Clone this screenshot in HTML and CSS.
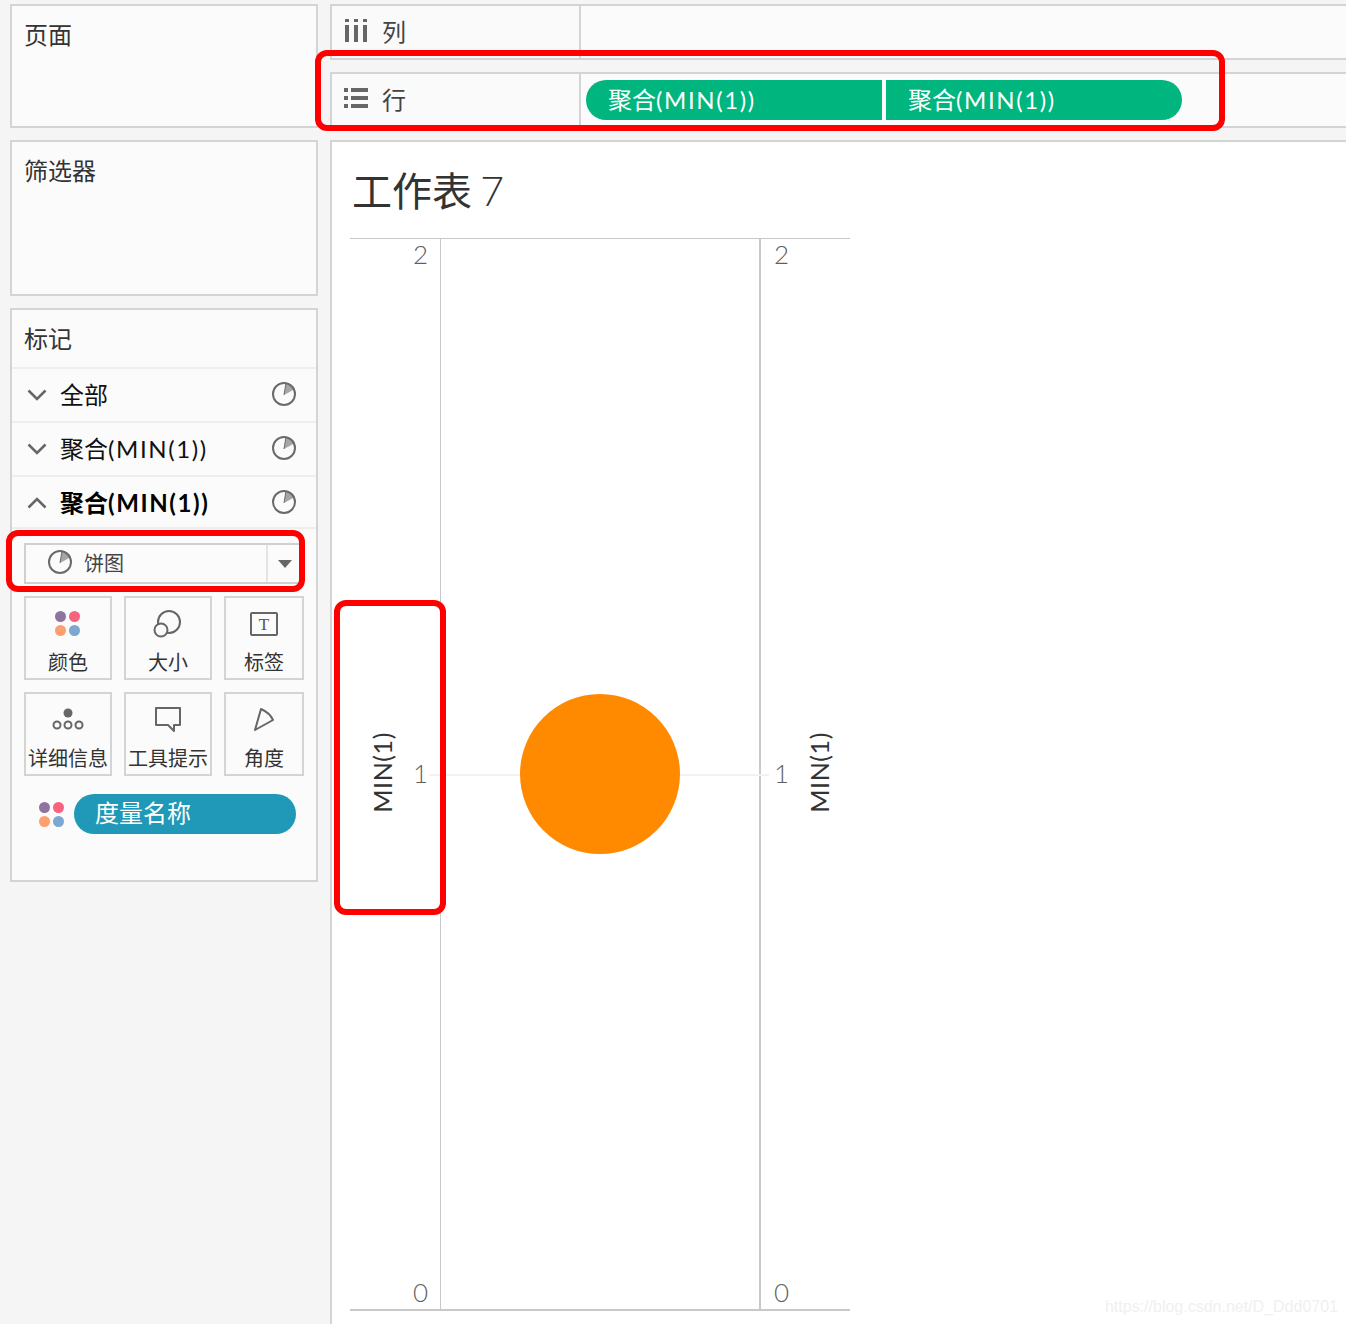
FILE: index.html
```html
<!DOCTYPE html>
<html lang="zh-CN">
<head>
    <meta charset="UTF-8">
    <meta name="viewport" content="width=device-width, initial-scale=1.0">
    <title>工作表 7</title>
    <link rel="stylesheet" href="styles.css">
</head>
<body>
    <svg class="defs" width="0" height="0">
        <symbol id="pie" viewBox="0 0 26 26">
            <path d="M13 14 15 2A11 11 0 0 1 24 8Z" fill="#a6a6a6"/>
            <circle cx="13" cy="13" r="11" fill="none" stroke="#6a6a6a" stroke-width="2"/>
            <path d="M13 14 15 2" fill="none" stroke="#6a6a6a"/>
        </symbol>
        <symbol id="dots" viewBox="0 0 26 26">
            <circle cx="6.500" cy="6.500" r="5.500" fill="#8f74a0"/>
            <circle cx="20.500" cy="6.500" r="5.500" fill="#f9627f"/>
            <circle cx="6.500" cy="20.500" r="5.500" fill="#fd9f6e"/>
            <circle cx="20.500" cy="20.500" r="5.500" fill="#7ba7d0"/>
        </symbol>
    </svg>

    <div class="layout">
        <aside class="side">
            <section class="card pages-card">页面</section>
            <section class="card filters-card">筛选器</section>
            <section class="card marks-card">
                <div class="marks-title">标记</div>
                <div class="mark-row">
                    <svg class="chev" viewBox="0 0 20 12"><path d="M1.500 1.500 10 10l8.500-8.500"/></svg>
                    <span class="mark-name">全部</span>
                    <svg class="pie"><use href="#pie"/></svg>
                </div>
                <div class="mark-row">
                    <svg class="chev" viewBox="0 0 20 12"><path d="M1.500 1.500 10 10l8.500-8.500"/></svg>
                    <span class="mark-name">聚合<span class="lat">(MIN(1))</span></span>
                    <svg class="pie"><use href="#pie"/></svg>
                </div>
                <div class="mark-row active">
                    <svg class="chev" viewBox="0 0 20 12"><path d="M1.500 10.500 10 2l8.500 8.500"/></svg>
                    <span class="mark-name">聚合<span class="lat">(MIN(1))</span></span>
                    <svg class="pie"><use href="#pie"/></svg>
                </div>
                <div class="type-select">
                    <svg class="pie"><use href="#pie"/></svg>
                    <span class="type-name">饼图</span>
                    <span class="type-arrow"></span>
                </div>
                <div class="mark-btns">
                    <div class="mark-btn">
                        <svg class="btn-icon" viewBox="0 0 30 30"><use href="#dots" x="1" y="0" width="26" height="26"/></svg>
                        <span>颜色</span>
                    </div>
                    <div class="mark-btn">
                        <svg class="btn-icon" viewBox="0 0 30 30" fill="none" stroke="#666" stroke-width="2"><circle cx="16" cy="12" r="11"/><circle cx="8" cy="20" r="6.500" fill="#fbfbfb"/></svg>
                        <span>大小</span>
                    </div>
                    <div class="mark-btn">
                        <svg class="btn-icon" viewBox="0 0 30 30"><rect x="2" y="3" width="26" height="22" fill="none" stroke="#666" stroke-width="2" rx="1"/><text x="15" y="20" class="t-glyph">T</text></svg>
                        <span>标签</span>
                    </div>
                    <div class="mark-btn">
                        <svg class="btn-icon btn-icon-wide" viewBox="0 0 34 30" fill="none" stroke="#666" stroke-width="2"><circle cx="17" cy="7" r="4.500" fill="#666" stroke="none"/><circle cx="6" cy="19" r="3.500"/><circle cx="17" cy="19" r="3.500"/><circle cx="28" cy="19" r="3.500"/></svg>
                        <span>详细信息</span>
                    </div>
                    <div class="mark-btn">
                        <svg class="btn-icon" viewBox="0 0 30 30" fill="none" stroke="#666" stroke-width="2"><path d="M3 2h24v17h-6v6l-6-6H3Z" stroke-linejoin="round"/></svg>
                        <span>工具提示</span>
                    </div>
                    <div class="mark-btn">
                        <svg class="btn-icon" viewBox="0 0 30 30" fill="none" stroke="#666" stroke-width="2"><path d="M12 3Q21 7 24 14L6 24Z" stroke-linejoin="round"/></svg>
                        <span>角度</span>
                    </div>
                </div>
                <div class="legend-row">
                    <svg class="legend-dots"><use href="#dots"/></svg>
                    <div class="legend-pill">度量名称</div>
                </div>
            </section>
        </aside>

        <main class="main">
            <div class="shelf">
                <div class="shelf-label">
                    <svg class="shelf-icon" viewBox="0 0 24 24" fill="#666"><rect x="1" y="1" width="4" height="3"/><rect x="1" y="7" width="4" height="17"/><rect x="10" y="1" width="4" height="3"/><rect x="10" y="7" width="4" height="17"/><rect x="19" y="1" width="4" height="3"/><rect x="19" y="7" width="4" height="17"/></svg>
                    <span>列</span>
                </div>
            </div>
            <div class="shelf">
                <div class="shelf-label">
                    <svg class="shelf-icon" viewBox="0 0 24 24" fill="#666"><rect x="0" y="2" width="4" height="4"/><rect x="7" y="2" width="17" height="4"/><rect x="0" y="10" width="4" height="4"/><rect x="7" y="10" width="17" height="4"/><rect x="0" y="18" width="4" height="4"/><rect x="7" y="18" width="17" height="4"/></svg>
                    <span>行</span>
                </div>
                <div class="shelf-pills">
                    <div class="pill pill-first">聚合<span class="lat">(MIN(1))</span></div>
                    <div class="pill pill-last">聚合<span class="lat">(MIN(1))</span></div>
                </div>
            </div>

            <section class="view">
                <h1 class="view-title">工作表 <span class="title-num">7</span></h1>
                <div class="chart">
                    <div class="axis axis-left">
                        <div class="axis-name">MIN(1)</div>
                        <div class="ticks"><span>2</span><span>1</span><span>0</span></div>
                    </div>
                    <div class="plot"><div class="mark-circle"></div></div>
                    <div class="axis axis-right">
                        <div class="ticks"><span>2</span><span>1</span><span>0</span></div>
                        <div class="axis-name">MIN(1)</div>
                    </div>
                </div>
            </section>
        </main>
    </div>

    <!-- red annotations drawn on top of the screenshot -->
    <div class="note note-rows"></div>
    <div class="note note-type"></div>
    <div class="note note-axis"></div>
    <div class="watermark">https://blog.csdn.net/D_Ddd0701</div>
</body>
</html>
```

FILE: styles.css
```css
* {
    box-sizing: border-box;
}
html, body {
    margin: 0;
    height: 1324px;
    overflow: hidden;
}
body {
    position: relative;
    background: #f5f5f5;
    color: #333;
    font-family: Lato, "Noto Sans CJK SC", sans-serif;
    font-size: 24px;
}
.defs {
    position: absolute;
}
.lat {
    letter-spacing: 1.600px;
}
.layout {
    display: flex;
    gap: 12px;
    height: 1324px;
    padding: 4px 0 0 10px;
}

/* left column */
.side {
    width: 308px;
    flex: none;
    display: flex;
    flex-direction: column;
    gap: 12px;
}
.card {
    background: #fbfbfb;
    border: 2px solid #d4d4d4;
}
.pages-card {
    height: 124px;
    padding: 11px 12px;
    line-height: 36px;
}
.filters-card {
    height: 156px;
    padding: 11px 12px;
    line-height: 36px;
}
.marks-card {
    height: 574px;
}
.marks-title {
    height: 59px;
    padding: 11px 12px;
    line-height: 36px;
    border-bottom: 2px solid #eeeeee;
}
.mark-row {
    height: 54px;
    display: flex;
    align-items: center;
    padding: 0 19px 0 15px;
    border-bottom: 2px solid #eeeeee;
    color: #111;
}
.mark-name {
    flex: 1;
    margin-left: 13px;
    padding-bottom: 4px;
}
.mark-row .pie {
    margin-bottom: 2px;
}
.mark-row.active {
    font-weight: bold;
    color: #000;
    height: 52px;
    padding-top: 2px;
}
.chev {
    width: 20px;
    height: 12px;
    fill: none;
    stroke: #666;
    stroke-width: 2.500;
}
.pie {
    width: 26px;
    height: 26px;
}
.type-select {
    display: flex;
    align-items: center;
    height: 41px;
    margin: 14px 12px 0 12px;
    padding: 0 0 3px 21px;
    background: #fbfbfb;
    border: 2px solid #d0d0d0;
    border-right: none;
}
.type-name {
    flex: 1;
    margin-left: 11px;
    font-size: 20px;
    color: #444;
}
.type-arrow {
    width: 38px;
    height: 37px;
    margin-bottom: -3px;
    border-left: 2px solid #e4e4e4;
    position: relative;
}
.type-arrow::after {
    content: "";
    position: absolute;
    left: 10px;
    top: 15px;
    border: 7px solid transparent;
    border-top: 8px solid #666;
    border-bottom: none;
}
.mark-btns {
    display: grid;
    grid-template-columns: 88px 88px 80px;
    grid-auto-rows: 84px;
    gap: 12px;
    margin: 12px 0 0 12px;
}
.mark-btn {
    display: flex;
    flex-direction: column;
    align-items: center;
    border: 2px solid #d4d4d4;
    padding-top: 12px;
    font-size: 20px;
    line-height: 28px;
    color: #333;
    white-space: nowrap;
}
.btn-icon {
    width: 30px;
    height: 30px;
    margin-bottom: 8px;
    flex: none;
}
.btn-icon-wide {
    width: 34px;
}
.t-glyph {
    font-family: "Liberation Serif", serif;
    font-size: 17px;
    fill: #555;
    text-anchor: middle;
}
.legend-row {
    display: flex;
    align-items: center;
    gap: 10px;
    margin: 18px 20px 0 26px;
}
.legend-dots {
    width: 26px;
    height: 26px;
    flex: none;
}
.legend-pill {
    flex: 1;
    height: 40px;
    padding-left: 21px;
    border-radius: 20px;
    background: #1f99b7;
    color: #fff;
    line-height: 38px;
}

/* right column */
.main {
    flex: 1;
    min-width: 0;
    display: flex;
    flex-direction: column;
    gap: 12px;
}
.shelf {
    height: 56px;
    display: flex;
    background: #fbfbfb;
    border: 2px solid #d4d4d4;
    border-right: none;
}
.shelf-label {
    width: 249px;
    flex: none;
    display: flex;
    align-items: center;
    gap: 14px;
    padding: 0 0 4px 12px;
    background: #fafafa;
    border-right: 2px solid #d4d4d4;
    color: #444;
}
.shelf-icon {
    width: 24px;
    height: 24px;
    flex: none;
}
.shelf-pills {
    display: flex;
    gap: 4px;
    padding: 6px 0 0 5px;
}
.pill {
    width: 296px;
    height: 40px;
    padding-left: 22px;
    background: #00b67e;
    color: #fff;
    line-height: 39px;
}
.pill-first {
    border-radius: 20px 0 0 20px;
}
.pill-last {
    border-radius: 0 20px 20px 0;
}
.view {
    flex: 1;
    background: #fff;
    border: 2px solid #d4d4d4;
    border-right: none;
    border-bottom: none;
    padding: 0 0 0 18px;
}
.view-title {
    margin: 0 0 0 2px;
    height: 96px;
    padding-top: 20px;
    font-size: 40px;
    font-weight: normal;
    line-height: 58px;
    color: #333;
}
.title-num {
    font-weight: 300;
    font-size: 41px;
    margin-left: -2px;
}
.chart {
    width: 500px;
    height: 1073px;
    display: flex;
    border-top: 1px solid #c8c8c8;
    border-bottom: 2px solid #c8c8c8;
    color: #5f5f5f;
}
.axis {
    display: flex;
    align-items: stretch;
    flex: none;
}
.axis-left {
    width: 90px;
    justify-content: flex-end;
    gap: 17px;
    padding-right: 12px;
}
.axis-right {
    width: 89px;
    gap: 16px;
    padding-left: 13px;
}
.axis-name {
    align-self: center;
    writing-mode: vertical-rl;
    transform: rotate(180deg);
    color: #333;
    font-size: 25px;
    letter-spacing: 0.600px;
    line-height: 28px;
    margin-bottom: 4px;
}
.ticks {
    display: flex;
    flex-direction: column;
    justify-content: space-between;
    font-size: 26px;
    font-weight: 300;
    line-height: 34px;
    margin-top: -2px;
}
.plot {
    flex: 1;
    position: relative;
    display: flex;
    align-items: center;
    justify-content: center;
    border-left: 1px solid #c8c8c8;
    border-right: 2px solid #c8c8c8;
}
.plot::before {
    content: "";
    position: absolute;
    left: -12px;
    right: -10px;
    top: 50%;
    height: 2px;
    background: #f2f2f2;
}
.mark-circle {
    position: relative;
    width: 160px;
    height: 160px;
    border-radius: 50%;
    background: #ff8a00;
}

/* overlays */
.note {
    position: absolute;
    border: 6px solid #ff0000;
    border-radius: 12px;
}
.note-rows {
    left: 315px;
    top: 50px;
    width: 910px;
    height: 81px;
}
.note-type {
    left: 6px;
    top: 530px;
    width: 299px;
    height: 62px;
}
.note-axis {
    left: 334px;
    top: 600px;
    width: 112px;
    height: 315px;
}
.watermark {
    position: absolute;
    right: 8px;
    bottom: 8px;
    font-family: "Liberation Sans", sans-serif;
    font-size: 16px;
    color: #f0f0f0;
}
```
